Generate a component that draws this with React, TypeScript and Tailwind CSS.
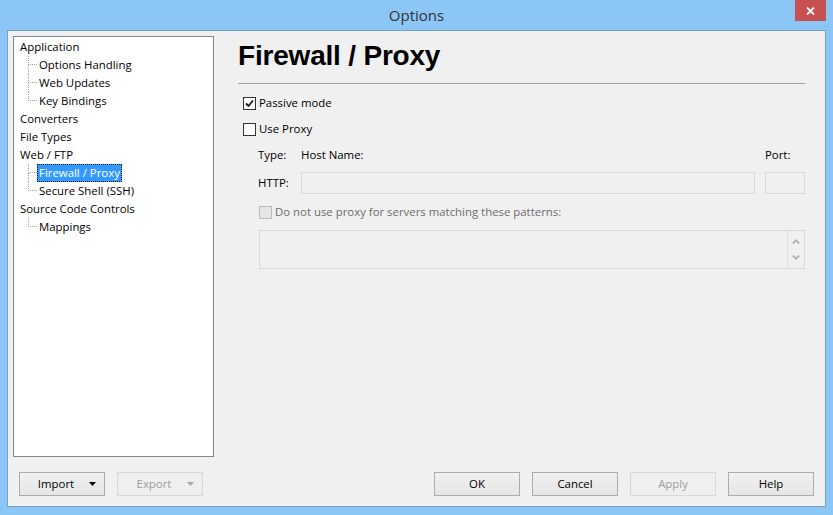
import type { ReactNode } from 'react';

const FONT = "font-['Open_Sans','Noto_Sans',sans-serif]";

type Node = { label: string; children?: string[] };

const TREE: Node[] = [
  { label: 'Application', children: ['Options Handling', 'Web Updates', 'Key Bindings'] },
  { label: 'Converters' },
  { label: 'File Types' },
  { label: 'Web / FTP', children: ['Firewall / Proxy', 'Secure Shell (SSH)'] },
  { label: 'Source Code Controls', children: ['Mappings'] },
];

const SELECTED = 'Firewall / Proxy';

function ChildRow({ label, last }: { label: string; last: boolean }) {
  const selected = label === SELECTED;
  return (
    <div className="flex h-[18px] items-stretch">
      <div className="ml-[8px] flex w-[9px] flex-col">
        <div className="h-[9px] border-l border-b border-dotted border-[#a0a0a0]" />
        <div className={last ? 'h-[9px]' : 'h-[9px] border-l border-dotted border-[#a0a0a0]'} />
      </div>
      <span
        className={
          selected
            ? 'flex items-center bg-[#3399ff] px-[2px] text-white outline outline-1 outline-dotted outline-[#1a1a1a] -outline-offset-1'
            : 'flex items-center px-[2px] text-black'
        }
      >
        {label}
      </span>
    </div>
  );
}

function Tree() {
  return (
    <div className="h-[421px] w-[201px] border border-[#828790] bg-white pl-[6px] pt-[1px] text-[11.4px]">
      {TREE.map((n) => (
        <div key={n.label}>
          <div className="flex h-[18px] items-center text-black">{n.label}</div>
          {n.children?.map((c, i) => (
            <ChildRow key={c} label={c} last={i === n.children!.length - 1} />
          ))}
        </div>
      ))}
    </div>
  );
}

function CheckBox({ checked, disabled }: { checked?: boolean; disabled?: boolean }) {
  return (
    <span
      className={
        disabled
          ? 'flex h-[13px] w-[13px] shrink-0 items-center justify-center border border-[#bcbcbc] bg-[#e6e6e6]'
          : 'flex h-[13px] w-[13px] shrink-0 items-center justify-center border border-[#333333] bg-white'
      }
    >
      {checked && (
        <svg width="9" height="9" viewBox="0 0 9 9">
          <path d="M1 4.5 L3.5 7 L8 1.5" fill="none" stroke="#1a1a1a" strokeWidth="1.8" />
        </svg>
      )}
    </span>
  );
}

function Button({ children, disabled, menu }: { children: ReactNode; disabled?: boolean; menu?: boolean }) {
  return (
    <div
      className={
        disabled
          ? 'relative flex h-[24px] w-[86px] items-center justify-center border border-[#d9d9d9] bg-[#efefef] text-[11.4px] text-[#9d9d9d]'
          : 'relative flex h-[24px] w-[86px] items-center justify-center border border-[#acacac] bg-gradient-to-b from-[#f0f0f0] to-[#e5e5e5] text-[11.4px] text-black'
      }
    >
      <span className={menu ? 'mr-[12px]' : ''}>{children}</span>
      {menu && (
        <svg className="absolute right-[8px] top-[9px]" width="7" height="4" viewBox="0 0 7 4">
          <path d="M0 0 H7 L3.5 4 Z" fill={disabled ? '#a8a8a8' : '#000'} />
        </svg>
      )}
    </div>
  );
}

function Content() {
  return (
    <div className="ml-[24px] flex flex-1 flex-col pr-[20px] text-[11.4px] text-black">
      <h1 className="mt-[4px] h-[32px] font-['Liberation_Sans',Arial,sans-serif] text-[28px] leading-[32px] font-bold tracking-[-0.2px] text-black">
        Firewall / Proxy
      </h1>
      <div className="mt-[11px] h-px bg-[#a0a0a0]" />
      <label className="mt-[10px] flex h-[18px] items-center gap-[3px] pl-[5px]">
        <CheckBox checked />
        <span>Passive mode</span>
      </label>
      <label className="mt-[8px] flex h-[18px] items-center gap-[3px] pl-[5px]">
        <CheckBox />
        <span>Use Proxy</span>
      </label>
      <div className="mt-[8px] flex h-[18px] items-center pl-[20px]">
        <span className="w-[43px]">Type:</span>
        <span className="flex-1">Host Name:</span>
        <span className="w-[40px]">Port:</span>
      </div>
      <div className="mt-[8px] flex h-[22px] items-center pl-[20px]">
        <span className="w-[43px]">HTTP:</span>
        <div className="h-[22px] flex-1 border border-[#d9d9d9] bg-[#f0f0f0]" />
        <div className="ml-[10px] h-[22px] w-[40px] border border-[#d9d9d9] bg-[#f0f0f0]" />
      </div>
      <label className="mt-[9px] flex h-[18px] items-center gap-[3px] pl-[21px] text-[#6d6d6d]">
        <CheckBox disabled />
        <span>Do not use proxy for servers matching these patterns:</span>
      </label>
      <div className="ml-[21px] mt-[9px] flex h-[39px] border border-[#d9d9d9] bg-[#f0f0f0]">
        <div className="flex-1" />
        <div className="flex w-[17px] flex-col items-center justify-between border-l border-[#dedede] py-[8px]">
          <svg width="8" height="5" viewBox="0 0 8 5">
            <path d="M0.8 4.5 L4 1.3 L7.2 4.5" fill="none" stroke="#b4b4b4" strokeWidth="1.8" />
          </svg>
          <svg width="8" height="5" viewBox="0 0 8 5">
            <path d="M0.8 0.5 L4 3.7 L7.2 0.5" fill="none" stroke="#b4b4b4" strokeWidth="1.8" />
          </svg>
        </div>
      </div>
    </div>
  );
}

export default function App() {
  return (
    <div className={`${FONT} flex h-[515px] w-[833px] flex-col bg-[#8bc6f7]`}>
      <div className="relative flex h-[30px] items-center justify-center">
        <span className="text-[15px] text-[#333333]">Options</span>
        <div className="absolute right-[7px] top-0 flex h-[21px] w-[31px] items-center justify-center bg-[#c75050]">
          <svg width="9" height="8" viewBox="0 0 9 8">
            <path d="M1 0.5 L8 7.5 M8 0.5 L1 7.5" stroke="#fff" strokeWidth="1.8" />
          </svg>
        </div>
      </div>
      <div className="mx-[7px] flex h-[477px] flex-col border border-[#6fa3d4] bg-[#f0f0f0]">
        <div className="flex pl-[5px] pt-[5px]">
          <Tree />
          <Content />
        </div>
        <div className="mt-[15px] flex items-center px-[11px]">
          <Button menu>Import</Button>
          <div className="ml-[12px]">
            <Button menu disabled>Export</Button>
          </div>
          <div className="ml-auto flex gap-[12px]">
            <Button>OK</Button>
            <Button>Cancel</Button>
            <Button disabled>Apply</Button>
            <Button>Help</Button>
          </div>
        </div>
      </div>
    </div>
  );
}
